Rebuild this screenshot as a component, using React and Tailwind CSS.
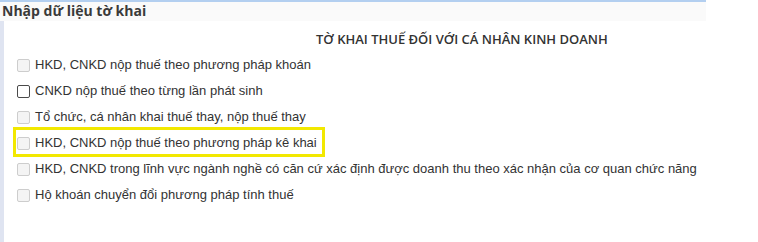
const options = [
    { label: 'HKD, CNKD nộp thuế theo phương pháp khoán', disabled: true },
    { label: 'CNKD nộp thuế theo từng lần phát sinh', disabled: false },
    { label: 'Tổ chức, cá nhân khai thuế thay, nộp thuế thay', disabled: true },
    { label: 'HKD, CNKD nộp thuế theo phương pháp kê khai', disabled: true, marked: true },
    { label: 'HKD, CNKD trong lĩnh vực ngành nghề có căn cứ xác định được doanh thu theo xác nhận của cơ quan chức năng', disabled: true },
    { label: 'Hộ khoán chuyển đổi phương pháp tính thuế', disabled: true },
];

function Box({ disabled }) {
    return disabled ? (
        <span className="inline-block h-[13px] w-[13px] shrink-0 rounded-[2px] border border-[#cdcdcd] bg-[#f4f4f4]" />
    ) : (
        <span className="inline-block h-[13px] w-[13px] shrink-0 rounded-[2px] border border-[#4a4a4a] bg-white" />
    );
}

export default function App() {
    return (
        <div className="h-[242px] w-[758px] overflow-hidden bg-white font-['Liberation_Sans',Arial,sans-serif] text-[#333]">
            {/* Panel header */}
            <div className="w-[706px] border-t-2 border-[#b3cff0]">
                <div className="h-[19px] bg-[#fafafa] pl-[2px] font-['Open_Sans',sans-serif] text-[14px] font-bold leading-[17px] text-[#3a3a3a]">
                    Nhập dữ liệu tờ khai
                </div>
            </div>

            <div className="flex h-[221px]">
                <div className="w-[4px] shrink-0 bg-[#dfe4f1]" />
                <div className="flex-1">
                    <div className="pt-[10px] pl-[312px] font-['Open_Sans',sans-serif] text-[13px] font-semibold leading-[16px] text-[#333]">
                        TỜ KHAI THUẾ ĐỐI VỚI CÁ NHÂN KINH DOANH
                    </div>

                    <div className="mt-[5px] flex flex-col pl-[13px]">
                        {options.map((opt) => (
                            <label key={opt.label} className="relative flex h-[26px] items-center gap-[5px] text-[13px] leading-[16px]">
                                <Box disabled={opt.disabled} />
                                <span className="whitespace-nowrap">{opt.label}</span>
                                {opt.marked && (
                                    <span className="pointer-events-none absolute left-[-4px] top-[-3px] h-[30px] w-[312px] border-[3px] border-[#f2e800]" />
                                )}
                            </label>
                        ))}
                    </div>
                </div>
            </div>
        </div>
    );
}
